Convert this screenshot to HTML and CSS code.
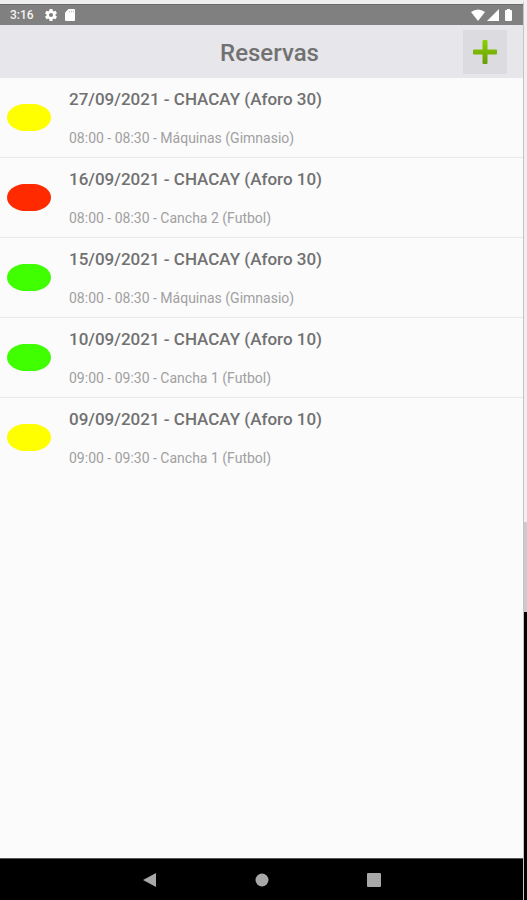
FILE: index.html
```
<!DOCTYPE html>
<html lang="es">
<head>
  <meta charset="UTF-8"/>
  <meta name="viewport" content="width=device-width, initial-scale=1.0"/>
  <title>Reservas</title>
  <link rel="stylesheet" href="styles.css">
</head>
<body>

  <div class="phone">
    <div class="status-bar">
      <span class="clock">3:16</span>
      <svg class="icon-gear" width="12" height="12" viewBox="2 2 20 20"><path fill="#fff" d="M19.43 12.98c.04-.32.07-.64.07-.98s-.03-.66-.07-.98l2.11-1.65c.19-.15.24-.42.12-.64l-2-3.46c-.12-.22-.39-.3-.61-.22l-2.49 1c-.52-.4-1.08-.73-1.69-.98l-.38-2.65A.49.49 0 0 0 14 2h-4c-.25 0-.46.18-.49.42l-.38 2.65c-.61.25-1.17.59-1.69.98l-2.49-1c-.23-.09-.49 0-.61.22l-2 3.46c-.13.22-.07.49.12.64l2.11 1.65c-.04.32-.07.65-.07.98s.03.66.07.98l-2.11 1.65c-.19.15-.24.42-.12.64l2 3.46c.12.22.39.3.61.22l2.49-1c.52.4 1.08.73 1.69.98l.38 2.65c.03.24.24.42.49.42h4c.25 0 .46-.18.49-.42l.38-2.65c.61-.25 1.17-.59 1.69-.98l2.49 1c.23.09.49 0 .61-.22l2-3.46c.12-.22.07-.49-.12-.64zM12 15.500a3.500 3.500 0 1 1 0-7 3.500 3.500 0 0 1 0 7z"/></svg>
      <svg class="icon-card" width="10" height="12" viewBox="0 0 10 12"><path fill="#fff" d="M3.500 0H9a1 1 0 0 1 1 1v10a1 1 0 0 1-1 1H1a1 1 0 0 1-1-1V3.500z"/><path stroke="#ccc" d="M4.500 1.500v2M6.500 1.500v2M8.500 1.500v2"/></svg>
      <div class="signals">
        <svg width="14" height="12" viewBox="0 0 14 12"><path fill="#fff" d="M0 3Q7-2 14 3L7 12z"/></svg>
        <svg width="12" height="12" viewBox="0 0 12 12"><path fill="#fff" d="M12 0v12H0z"/></svg>
        <svg class="icon-battery" width="7" height="12" viewBox="0 0 7 12"><path fill="#fff" d="M2 0h3v1h1a1 1 0 0 1 1 1v9a1 1 0 0 1-1 1H1a1 1 0 0 1-1-1V2a1 1 0 0 1 1-1h1z"/></svg>
      </div>
    </div>

    <header>
      <h1>Reservas</h1>
      <button type="button" class="btn-add" aria-label="Nueva reserva">
        <svg width="26" height="26" viewBox="0 0 26 26">
          <defs>
            <linearGradient id="plusFill" x1="0" y1="0" x2="0" y2="1">
              <stop offset="0" stop-color="#8fd000"/>
              <stop offset="1" stop-color="#669c0c"/>
            </linearGradient>
          </defs>
          <path fill="url(#plusFill)" d="M11.500 1h3a1 1 0 0 1 1 1v8.500H24a1 1 0 0 1 1 1v3a1 1 0 0 1-1 1h-8.500V24a1 1 0 0 1-1 1h-3a1 1 0 0 1-1-1v-8.500H2a1 1 0 0 1-1-1v-3a1 1 0 0 1 1-1h8.500V2a1 1 0 0 1 1-1z"/>
        </svg>
      </button>
    </header>

    <main>
      <ul class="bookings">
        <li class="booking">
          <svg class="state pending" viewBox="0 0 44 27"><path d="M16 0h12C36 1 44 6 44 13.500S36 26 28 27H16C8 26 0 21 0 13.500S8 1 16 0z"/></svg>
          <div>
            <h2>27/09/2021 - CHACAY (Aforo 30)</h2>
            <p>08:00 - 08:30 - Máquinas (Gimnasio)</p>
          </div>
        </li>
        <li class="booking">
          <svg class="state rejected" viewBox="0 0 44 27"><path d="M16 0h12C36 1 44 6 44 13.500S36 26 28 27H16C8 26 0 21 0 13.500S8 1 16 0z"/></svg>
          <div>
            <h2>16/09/2021 - CHACAY (Aforo 10)</h2>
            <p>08:00 - 08:30 - Cancha 2 (Futbol)</p>
          </div>
        </li>
        <li class="booking">
          <svg class="state accepted" viewBox="0 0 44 27"><path d="M16 0h12C36 1 44 6 44 13.500S36 26 28 27H16C8 26 0 21 0 13.500S8 1 16 0z"/></svg>
          <div>
            <h2>15/09/2021 - CHACAY (Aforo 30)</h2>
            <p>08:00 - 08:30 - Máquinas (Gimnasio)</p>
          </div>
        </li>
        <li class="booking">
          <svg class="state accepted" viewBox="0 0 44 27"><path d="M16 0h12C36 1 44 6 44 13.500S36 26 28 27H16C8 26 0 21 0 13.500S8 1 16 0z"/></svg>
          <div>
            <h2>10/09/2021 - CHACAY (Aforo 10)</h2>
            <p>09:00 - 09:30 - Cancha 1 (Futbol)</p>
          </div>
        </li>
        <li class="booking">
          <svg class="state pending" viewBox="0 0 44 27"><path d="M16 0h12C36 1 44 6 44 13.500S36 26 28 27H16C8 26 0 21 0 13.500S8 1 16 0z"/></svg>
          <div>
            <h2>09/09/2021 - CHACAY (Aforo 10)</h2>
            <p>09:00 - 09:30 - Cancha 1 (Futbol)</p>
          </div>
        </li>
      </ul>
    </main>

    <nav class="nav-bar">
      <button type="button" aria-label="Atrás"><svg width="14" height="14" viewBox="0 0 14 14"><path fill="#a8a8a8" d="M13 0v14L0 7z"/></svg></button>
      <button type="button" aria-label="Inicio"><svg width="14" height="14" viewBox="0 0 14 14"><circle cx="7" cy="7" r="6.500" fill="#a8a8a8"/></svg></button>
      <button type="button" aria-label="Recientes"><svg width="14" height="14" viewBox="0 0 14 14"><rect width="14" height="14" rx="1" fill="#a8a8a8"/></svg></button>
    </nav>
  </div>

  <!-- Desktop behind the emulator -->
  <div class="desktop"></div>

</body>
</html>
```
FILE: styles.css
```
* {
  box-sizing: border-box;
}

body {
  font-family: Roboto, sans-serif;
  margin: 0;
  min-height: 100vh;
  display: flex;
  background-color: #fbfbfb;
  color: #717171;
}

.phone {
  flex: 1;
  display: flex;
  flex-direction: column;
  border-top: 4px solid #eeeeee;
  border-right: 1px solid #c4c4c4;
}

.status-bar {
  display: flex;
  align-items: center;
  height: 21px;
  padding: 0 11px 0 10px;
  background-color: #808080;
  border-top: 1px solid #6c6c6c;
  color: #f4f4f4;
}

.clock {
  font-size: 12px;
  font-weight: 500;
  margin-right: 11px;
}

.icon-card {
  margin-left: 8px;
}

.signals {
  display: flex;
  gap: 2px;
  margin-left: auto;
}

.icon-battery {
  margin-left: 4px;
}

header {
  display: grid;
  grid-template-columns: 1fr auto 1fr;
  align-items: center;
  height: 53px;
  padding: 0 16px 0 32px;
  background-color: #e7e6eb;
}

h1 {
  grid-column: 2;
  margin: 0;
  padding-top: 2px;
  font-size: 24px;
  font-weight: 500;
}

.btn-add {
  justify-self: end;
  display: flex;
  align-items: center;
  justify-content: center;
  width: 44px;
  height: 44px;
  padding: 0;
  border: none;
  background-color: #dcdbe0;
  cursor: pointer;
}

main {
  flex: 1;
}

.bookings {
  list-style: none;
  margin: 0;
  padding: 0;
}

.booking {
  display: flex;
  align-items: center;
  gap: 18px;
  height: 80px;
  padding: 0 7px;
  border-bottom: 1px solid #e9e9eb;
}

.booking:last-child {
  border-bottom-color: transparent;
}

.state {
  width: 44px;
  height: 27px;
}

.pending {
  fill: #ffff00;
}

.rejected {
  fill: #ff2a00;
}

.accepted {
  fill: #40ff00;
}

.booking h2 {
  margin: 2px 0 19px;
  font-size: 17px;
  line-height: 20px;
  font-weight: 500;
}

.booking p {
  margin: 0;
  font-size: 14px;
  line-height: 20px;
  color: #a0a0a0;
}

.nav-bar {
  display: flex;
  justify-content: center;
  gap: 84px;
  height: 42px;
  background-color: #000;
  border-top: 1px solid #555;
}

.nav-bar button {
  display: flex;
  align-items: center;
  justify-content: center;
  width: 28px;
  padding: 0;
  border: none;
  background: none;
  cursor: pointer;
}

.desktop {
  width: 3px;
  background: linear-gradient(#f0f0f0 58%, #cccccc 58%, #cccccc 68%, #000 68%);
}
```
